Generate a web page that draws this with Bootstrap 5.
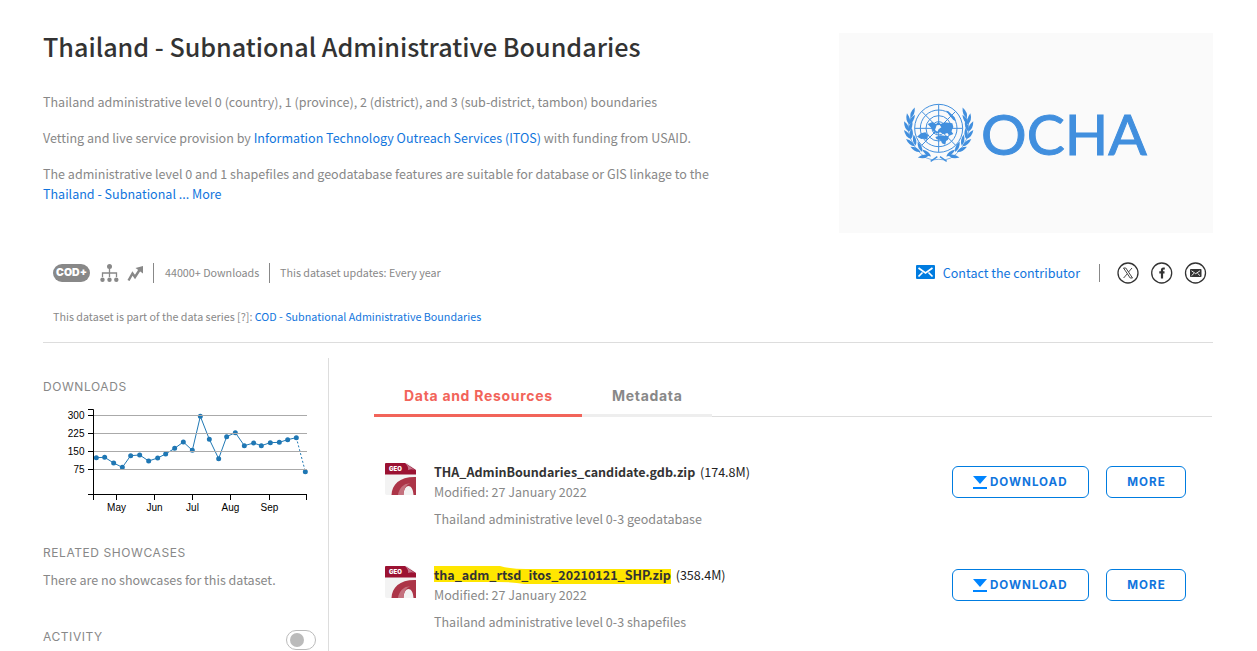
<!DOCTYPE html>
<html lang="en">
<head>
<meta charset="utf-8">
<title>Thailand - Subnational Administrative Boundaries</title>
<link href="https://cdn.jsdelivr.net/npm/bootstrap@5.3.0/dist/css/bootstrap.min.css" rel="stylesheet">
<style>
body{font-family:"Noto Sans CJK SC","Noto Sans",sans-serif;font-size:12.54px;line-height:20px;color:#888;background:#fff;height:651px;overflow:hidden}
a{color:#1175dd;text-decoration:none}
.page{padding:33px 44px 0 43px;height:651px}
.page>*{flex-shrink:0}
.page-title{font-size:25.15px;line-height:30px;font-weight:500;color:#333;margin:-2px 0 31px}
.intro{height:200px}
.intro p{margin:0 0 16px;white-space:nowrap}
.org{width:374px;height:200px;background:#fafafa;padding-left:61px}
.org-name{font-family:Lato,sans-serif;font-size:57px;line-height:60px;color:#418fde;margin-left:1px;-webkit-text-stroke:1px #418fde}
.meta{height:20px;margin-top:30px;font-size:10.74px}
.cod{width:37px;height:18px;border-radius:9px;background:#888;color:#fff;font:900 10.5px/18px Inter,sans-serif;text-align:center;margin-left:10px}
.bar{width:1px;height:20px;background:#888}
.series{font-size:10.74px;margin-top:24px;padding-left:10px}
.rule{height:1px;background:#ddd;margin-top:15px}
.side{width:286px;height:293px;border-right:1px solid #ddd;margin-top:15px}
.side h2{font:400 12px/16px Inter,sans-serif;letter-spacing:.57px;color:#888;margin:0}
.main-col{margin-left:45px;width:838px;margin-top:33px}
.tabs{border-bottom:1px solid #ddd;height:41px}
.tab{height:41px;border-bottom:3px solid #eee;font:700 14px/40px Inter,sans-serif;letter-spacing:.7px;color:#888;padding:0 0 0 30px;white-space:nowrap}
.tab.on{color:#f2645a;border-color:#f2645a}
.res{height:103px;padding:0 26px 0 11px}
.fname{color:#333;font-weight:700;margin-right:2px}
.fsize{color:#222}
.act{height:32px;border:1px solid #007ce0;border-radius:6px;color:#1175dd;font:700 11.6px/30px Inter,sans-serif;letter-spacing:1px;margin-top:3px;text-align:center}
.act.get{width:137px;text-align:left;padding-left:20px}
.act.more{width:80px;margin-left:17px;padding-left:1px}
.act svg{margin-right:3px}
.hl{position:relative;z-index:0}
.hl svg{position:absolute;left:0;top:1px;z-index:-1}
.toggle{width:30px;height:20px;border:1px solid #bbb;border-radius:10px;padding:2px 3px;margin-top:1px}
.toggle i{display:block;width:14px;height:14px;border-radius:50%;background:#bbb}
</style>
</head>
<body>
<svg width="0" height="0" class="position-absolute">
<defs>
<g id="geo"><path d="M1 0H23L31 7V32H2Q0 32 0 30V1Q0 0 1 0" fill="#f3f3f3"/><path d="M1 0H20L31 7V11.500H0V1Q0 0 1 0" fill="#9b1232"/><path d="M20 0Q24 4 23 7Q28 5 31 8Z" fill="#c4748a"/><path d="M6.500 32C7 21 15 13.500 31 14V32H28.500C28 20 19 20 18.500 32Z" fill="#ac3548"/><path d="M13 32C14 25 19 20 25 20.500Q19 22 18.500 32Z" fill="#c4717e"/></g>
<path id="leaf" d="M0 4Q10-10 0-30Q-10-10 0 4"/>
<g id="branch"><path d="M36 50Q10 95 44 145T116 184" fill="none" stroke="#418fde" stroke-width="2"/>
<use href="#leaf" transform="translate(33 56) rotate(22)"/>
<use href="#leaf" transform="translate(27 75) rotate(-12)"/><use href="#leaf" transform="translate(29 76) rotate(32)"/>
<use href="#leaf" transform="translate(25 97) rotate(-25)"/><use href="#leaf" transform="translate(28 97) rotate(17)"/>
<use href="#leaf" transform="translate(30 120) rotate(-37)"/><use href="#leaf" transform="translate(33 119) rotate(4)"/>
<use href="#leaf" transform="translate(41 142) rotate(-50)"/><use href="#leaf" transform="translate(46 139) rotate(-10)"/>
<use href="#leaf" transform="translate(58 160) rotate(-63)"/><use href="#leaf" transform="translate(65 158) rotate(-24)"/>
<use href="#leaf" transform="translate(83 173) rotate(-100)"/><use href="#leaf" transform="translate(90 173) rotate(-52)"/></g>
</defs></svg>
<div class="page d-flex flex-column">
  <header class="intro d-flex justify-content-between">
    <div>
      <h1 class="page-title">Thailand - Subnational Administrative Boundaries</h1>
      <p>Thailand administrative level 0 (country), 1 (province), 2 (district), and 3 (sub-district, tambon) boundaries</p>
      <p>Vetting and live service provision by <a href="#">Information Technology Outreach Services (ITOS)</a> with funding from USAID.</p>
      <p>The administrative level 0 and 1 shapefiles and geodatabase features are suitable for database or GIS linkage to the<br><a href="#">Thailand - Subnational ... More</a></p>
    </div>
    <div class="org d-flex align-items-center">
      <svg width="80" height="70" viewBox="0 0 240 210" fill="#418fde">
        <g fill="none" stroke="#418fde" stroke-width="3"><circle cx="116" cy="91" r="72"/><circle cx="116" cy="91" r="55"/><circle cx="116" cy="91" r="38"/><circle cx="116" cy="91" r="20"/><path d="M116 19V163M44 91H188M65 40L167 142M167 40L65 142"/></g>
        <path d="M83 78L97 72L108 78L116 72L122 78L134 73L157 76L160 87L154 100L160 108L148 113L142 105L132 109L120 103L110 107L100 99L94 90ZM51 116L63 106L76 103L84 111L82 126L72 122L64 123ZM106 117L122 112L146 115L144 125L138 129L136 140L126 136L122 126L110 124ZM138 38L145 40L164 58L168 69L160 66L148 52Z"/><path d="M110 82L119 81L124 88L116 94L112 101L105 96Z" fill="#fafafa"/>
        <use href="#branch"/><use href="#branch" transform="translate(232) scale(-1 1)"/>
        <path d="M92 190L112 176M140 190L120 176" stroke="#418fde" stroke-width="4"/>
      </svg>
      <span class="org-name">OCHA</span>
    </div>
  </header>
  <div class="meta d-flex align-items-center">
    <div class="cod">COD+</div>
    <svg width="20" height="20" viewBox="0 0 20 20" style="margin-left:9px" fill="#888"><circle cx="10.500" cy="3.500" r="2.500"/><path d="M3.500 14V10H17.500V14M10.500 5V14" fill="none" stroke="#888" stroke-width="1.300"/><circle cx="3.500" cy="16.800" r="2.200"/><circle cx="10.500" cy="16.800" r="2.200"/><circle cx="17.300" cy="16.800" r="2.200"/></svg>
    <svg width="18" height="18" viewBox="0 0 18 18" style="margin-left:7px"><path d="M2.500 16.500L6.500 9.500L9 13L13.500 6" fill="none" stroke="#888" stroke-width="2.400"/><path d="M9.500 4L17 2V9.500Z" fill="#888"/></svg>
    <div class="bar" style="margin-left:9px"></div>
    <span style="margin-left:11px;width:104px">44000+ Downloads</span>
    <div class="bar"></div>
    <span style="margin-left:10px">This dataset updates: Every year</span>
    <div class="ms-auto d-flex align-items-center" style="padding-right:6px">
      <svg width="19" height="14" viewBox="0 0 19 14" style="margin-bottom:2px"><rect width="19" height="14" rx="1" fill="#007ce0"/><path d="M2.500 3L9.500 8L16.500 3M2.500 11.500L6.500 7.500M16.500 11.500L12.500 7.500" fill="none" stroke="#fff" stroke-width="1.700"/></svg>
      <a href="#" style="font-size:12.54px;margin-left:8px">Contact the contributor</a>
      <div class="bar" style="margin:0 17px 0 19px;height:18px"></div>
      <svg width="90" height="22" viewBox="0 0 90 22" fill="none" stroke="#333" stroke-width="1.300" style="margin-bottom:1px"><circle cx="11" cy="11" r="10"/><circle cx="44.700" cy="11" r="10"/><circle cx="78.500" cy="11" r="10"/><path d="M6.500 6H8.800L15.500 16H13.200ZM15 6L11.500 10M10.300 11.800L6.600 16" stroke-width=".9"/><path d="M47.800 6.500H46.500Q45 6.500 45 8.200V16.500M42.300 10.300H47.500" stroke-width="2.200"/><rect x="73" y="7" width="11.500" height="8" rx=".8" fill="#333" stroke="none"/><path d="M74.500 8.800L78.700 11.700L83 8.800M74.500 13.700L77 11.300M83 13.700L80.500 11.300" stroke="#fff" stroke-width=".9"/></svg>
    </div>
  </div>
  <div class="series">This dataset is part of the data series [?]: <a href="#">COD - Subnational Administrative Boundaries</a></div>
  <div class="rule"></div>
  <div class="d-flex">
    <aside class="side">
      <h2 style="margin-top:21px">DOWNLOADS</h2>
      <svg width="270" height="120" viewBox="43 400 270 120" class="d-block" style="margin-top:5px" font-family="Liberation Sans,Arial,sans-serif" font-size="10">
        <g transform="translate(30 370) scale(.33333)" fill="#1f77b4">
          <polyline fill="none" stroke="#1f77b4" stroke-width="3" points="199,263 224,262 251,279 277,292 302,257 329,255 356,273 383,264 407,252 434,235 460,216 487,241 511,139 538,208 566,266 590,200 616,188 643,227 671,219 694,227 721,218 748,217 773,209 799,203"/>
          <path d="M799 203L826 305" stroke="#1f77b4" stroke-width="3" stroke-dasharray="6 6"/>
          <path d="M199 263h0M224 262h0M251 279h0M277 292h0M302 257h0M329 255h0M356 273h0M383 264h0M407 252h0M434 235h0M460 216h0M487 241h0M511 139h0M538 208h0M566 266h0M590 200h0M616 188h0M643 227h0M671 219h0M694 227h0M721 218h0M748 217h0M773 209h0M799 203h0M826 305h0" stroke="#1f77b4" stroke-width="15" stroke-linecap="round"/>
        </g>
        <path d="M94 415.500H307M94 433.500H307M94 451.500H307M94 469.500H307" stroke="#aaa"/>
        <path d="M88 409.500H93.500V494.500M88 415.500H93M88 433.500H93M88 451.500H93M88 469.500H93M88 494.500H307M93.500 494V500M116.500 494V500M154.500 494V500M192.500 494V500M230.500 494V500M269.500 494V500M306.500 494V500" stroke="#000" fill="none"/>
        <g text-anchor="end"><text x="84.500" y="419">300</text><text x="84.500" y="437">225</text><text x="84.500" y="455">150</text><text x="84.500" y="473">75</text></g>
        <g text-anchor="middle"><text x="116.500" y="511">May</text><text x="154.500" y="511">Jun</text><text x="192.500" y="511">Jul</text><text x="230.500" y="511">Aug</text><text x="269.500" y="511">Sep</text></g>
      </svg>
      <h2 style="margin-top:25px">RELATED SHOWCASES</h2>
      <div style="margin-top:9px">There are no showcases for this dataset.</div>
      <div class="d-flex justify-content-between" style="margin-top:39px;padding-right:12px"><h2>ACTIVITY</h2><div class="toggle"><i></i></div></div>
    </aside>
    <main class="main-col">
      <nav class="tabs d-flex"><a class="tab on" href="#" style="width:208px">Data and Resources</a><a class="tab" href="#" style="width:130px">Metadata</a></nav>
      <div style="height:46px"></div>
      <div class="res d-flex">
        <svg width="31" height="32" viewBox="0 0 31 32"><use href="#geo"/><text x="4" y="8.200" font-family="Inter" font-weight="900" font-size="6" fill="#fff">GEO</text></svg>
        <div class="flex-grow-1" style="margin:-1px 0 0 18px"><div><span class="fname">THA_AdminBoundaries_candidate.gdb.zip</span> <span class="fsize">(174.8M)</span></div><div>Modified: 27 January 2022</div><div style="margin-top:7px">Thailand administrative level 0-3 geodatabase</div></div>
        <a href="#" class="act get"><svg width="14" height="14" viewBox="0 0 14 14"><path d="M0 0H14L7 8ZM0 11H14V13H0Z" fill="#0085ff"/></svg>DOWNLOAD</a>
        <a href="#" class="act more">MORE</a>
      </div>
      <div class="res d-flex">
        <svg width="31" height="32" viewBox="0 0 31 32"><use href="#geo"/><text x="4" y="8.200" font-family="Inter" font-weight="900" font-size="6" fill="#fff">GEO</text></svg>
        <div class="flex-grow-1" style="margin:-1px 0 0 18px"><div><span class="fname hl"><svg width="238" height="18" viewBox="0 0 238 18"><path d="M0 0H66Q76 3 92 3H237V18H90Q80 16 64 16H0Z" fill="#ffe600"/></svg>tha_adm_rtsd_itos_20210121_SHP.zip</span> <span class="fsize">(358.4M)</span></div><div>Modified: 27 January 2022</div><div style="margin-top:7px">Thailand administrative level 0-3 shapefiles</div></div>
        <a href="#" class="act get"><svg width="14" height="14" viewBox="0 0 14 14"><path d="M0 0H14L7 8ZM0 11H14V13H0Z" fill="#0085ff"/></svg>DOWNLOAD</a>
        <a href="#" class="act more">MORE</a>
      </div>
    </main>
  </div>
</div>
<script src="https://cdn.jsdelivr.net/npm/bootstrap@5.3.0/dist/js/bootstrap.bundle.min.js"></script>
</body>
</html>
